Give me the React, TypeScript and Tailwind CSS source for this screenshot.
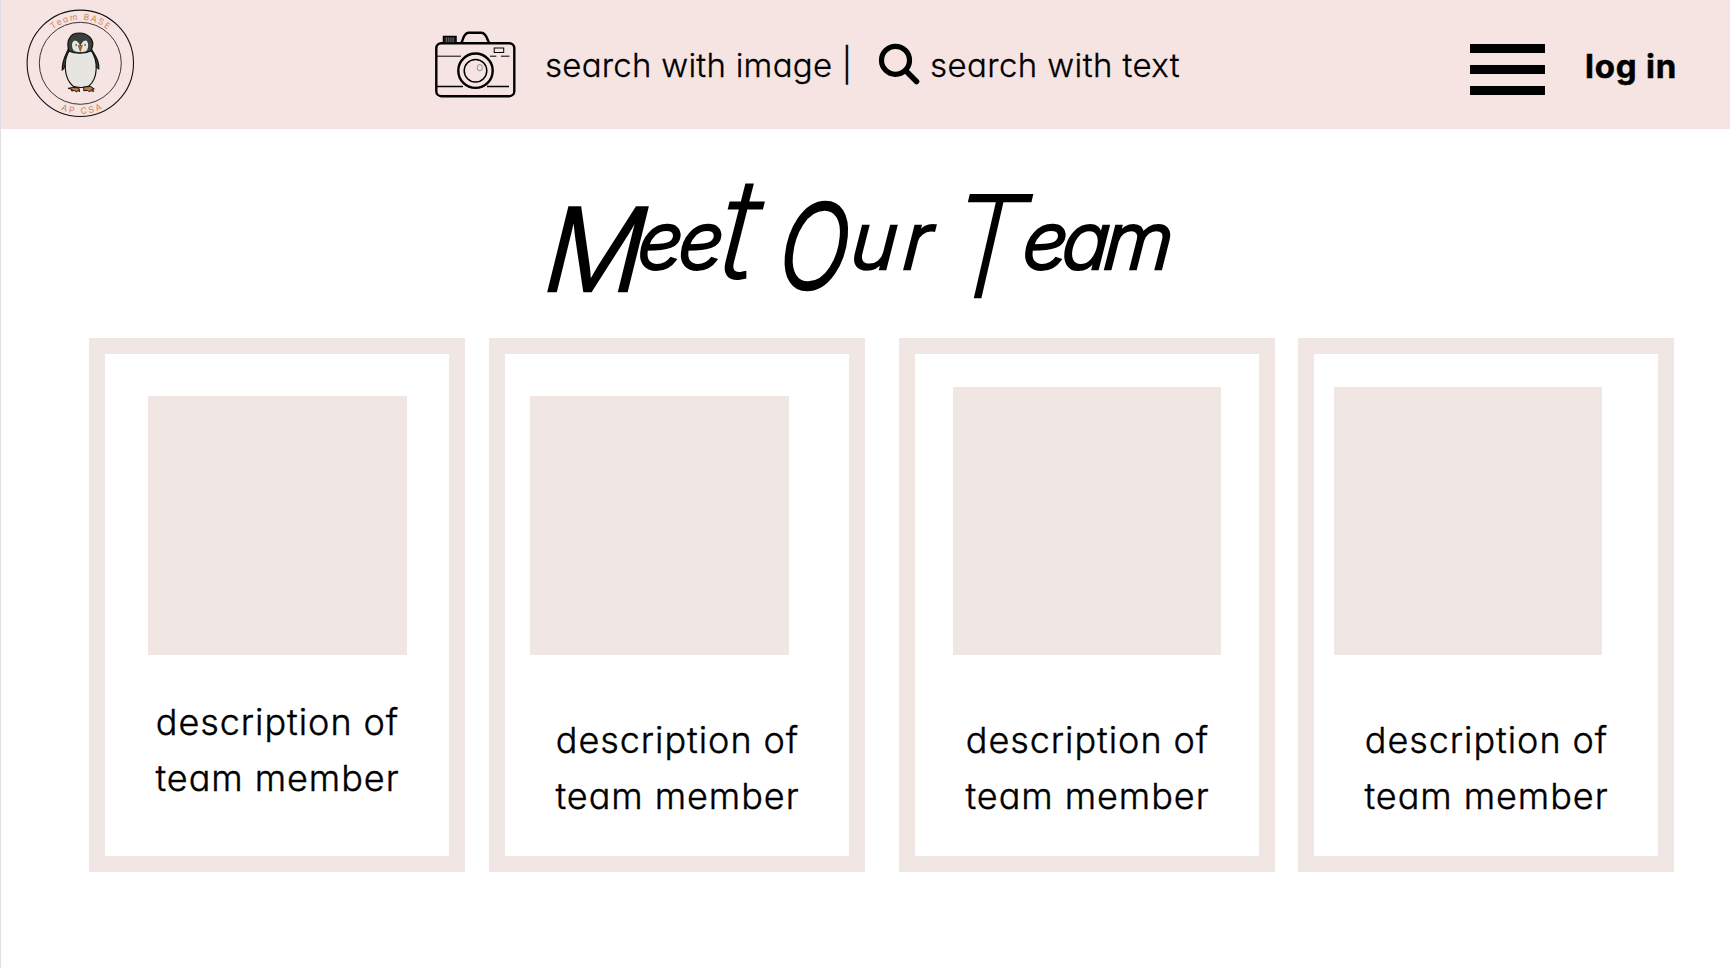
import React from "react";

const sans = "font-['Inter','Lato',sans-serif] [font-feature-settings:'cv11'] whitespace-nowrap";

function Logo() {
  return (
    <svg width="110" height="110" viewBox="25.2 8 110 110" fill="none" className="shrink-0">
      <defs>
        <path id="arcTop" d="M37 63.300a43.500 43.500 0 0 1 87 0" />
        <path id="arcBottom" d="M30 63.300a50.500 50.500 0 0 0 101 0" />
      </defs>
      <circle cx="80.5" cy="63.3" r="53.2" stroke="#111" strokeWidth="1.1" />
      <circle cx="80.5" cy="63.3" r="41" stroke="#222" strokeWidth="0.9" />
      <g className="font-['Inter',sans-serif]" fill="#cf8552" fontSize="8.6" textAnchor="middle">
        <text letterSpacing="1.500"><textPath href="#arcTop" startOffset="50.500%">Team BASE</textPath></text>
        <text letterSpacing="2.200"><textPath href="#arcBottom" startOffset="51.500%">AP CSA</textPath></text>
      </g>
      <path d="M69 48c-2 5-7 12-6.500 22 3-2 5-9 7-13zM91 48c2 5 9 11 8 21-3-1-5-8-7-12z" fill="#3b403e" stroke="#111" strokeWidth="1.200" />
      <path d="M70 50c-7 10-6 28 3 36 4 2 12 2 16 0 9-7 10-25 2-36-5-4-16-4-21 0z" fill="#e6e5df" stroke="#111" strokeWidth="1.200" />
      <path d="M69 51c-1-4-1.500-10 1-13 1-3 5-5 10-5 8 0 13 6 13 11 0 3-1 5-2 7-6 3-16 3-22 0z" fill="#3b403e" stroke="#111" strokeWidth="1.200" />
      <path d="M75 40.500c-4 1-3 8-1 10 3 2 10 2 13 0 2-3 2-9-1-10-3 0-4 3-5.500 5.500-1-3-3-5.500-5.500-5.500z" fill="#e6e5df" />
      <path d="M78.500 45.500h4l-2 6z" fill="#c96b24" stroke="#3b2412" strokeWidth=".5" />
      <circle cx="76.300" cy="45" r=".8" fill="#111" /><circle cx="85.300" cy="45" r=".8" fill="#111" />
      <path d="M73 87.500l6 .3.800 3.700-2-1-1 1.500-2-1.500-3 .5.500-1.500-4-1.200zM84 87l7-.5 3.500 2.500-2.500.3 2 2-3-.5-2 .8-1-1.300-4 .5z" fill="#c27a3c" stroke="#111" strokeWidth="1" />
    </svg>
  );
}

function Camera() {
  return (
    <svg width="82" height="68" viewBox="434 31 82 68" fill="none" stroke="#000" className="shrink-0">
      <rect x="436.300" y="43.200" width="78" height="53" rx="5" strokeWidth="2.400" />
      <path d="M461.500 42.500c1.800-3 2-9.500 7-9.800h13c5 .3 5.500 6.800 7.500 9.800" strokeWidth="2.400" />
      <path d="M443.500 42.500v-6h12.500v6" strokeWidth="1.500" fill="#222" />
      <path d="M446.500 37.500v4.500m2.200-4.500v4.500m2.200-4.500v4.500m2.200-4.500v4.500" stroke="#999" strokeWidth=".6" />
      <path d="M437 56.200h24m29 0h6.300m4.700 0h8.500" strokeWidth="1" />
      <path d="M437 86.400h26m24 0h22" strokeWidth="1.500" />
      <rect x="494.200" y="48" width="9.500" height="4.500" strokeWidth="1" />
      <circle cx="475.500" cy="70.700" r="17.200" strokeWidth="2.400" />
      <circle cx="475.500" cy="70.700" r="11.300" strokeWidth="1.500" />
      <ellipse cx="479.800" cy="67.700" rx="2.600" ry="3.100" stroke="#666" strokeWidth=".7" />
    </svg>
  );
}

function Header() {
  return (
    <header className={`${sans} flex h-[129px] items-start bg-[#f6e4e2] text-black`}>
      <div className="ml-6 mt-2 h-[110px] w-[110px]"><Logo /></div>
      <button className="ml-[299px] mt-[31px] flex"><Camera /></button>
      <span className="ml-[29px] mt-[45px] w-[302px] text-[33px] leading-[40px] font-light tracking-[0.25px] [-webkit-text-stroke:0.3px_black]">search with image |</span>
      <svg width="42" height="42" viewBox="0 0 42 42" fill="none" stroke="#000" strokeLinecap="round" className="ml-[31px] mt-[43px] shrink-0">
        <circle cx="17.500" cy="17.300" r="14" strokeWidth="5.200" />
        <path d="m28 28 10.500 10.500" strokeWidth="5.500" />
      </svg>
      <span className="ml-[10px] mt-[45px] w-[250px] text-[33px] leading-[40px] font-light tracking-[0.4px] [-webkit-text-stroke:0.3px_black]">search with text</span>
      <button className="ml-[290px] mt-[44px] flex w-[75px] shrink-0 flex-col gap-3">
        <span className="h-[9px] bg-black" />
        <span className="h-[9px] bg-black" />
        <span className="h-[9px] bg-black" />
      </button>
      <a className="ml-[40px] mt-[46px] text-[33px] leading-[40px] font-bold tracking-[0.8px] [-webkit-text-stroke:0.5px_black]">log in</a>
    </header>
  );
}

function Title() {
  return (
    <h1 className="flex h-[209px] -skew-x-5 items-baseline pl-[547px] pt-[99px] font-['Inter','Lato',sans-serif] text-[79px] leading-[0] font-light italic text-black [font-feature-settings:'cv11'] [-webkit-text-stroke:2.4px_black] [stroke-linejoin:round] whitespace-nowrap">
      <span className="w-[233px] tracking-[-4px]">
        <span className="inline-block w-[91px] origin-left scale-x-96 align-[-22px] text-[115px]">M</span>ee<span className="inline-block w-[50px] origin-left align-[-9px] text-[138px] [font-weight:200]">t</span>
      </span>
      <span className="w-[170px] tracking-[6px]">
        <span className="inline-block w-[71px] origin-left scale-x-78 align-[-20px] text-[118px]">O</span>ur
      </span>
      <span className="tracking-[-5.5px]">
        <span className="inline-block w-[73px] origin-left scale-x-86 align-[-28px] text-[140px] [font-weight:200]">T</span>eam
      </span>
    </h1>
  );
}

const members = [
  { card: "ml-0", photo: "ml-[42.5px] mt-[42px] h-[259px] w-[259.5px]", text: "mt-[39px]" },
  { card: "ml-[24px]", photo: "ml-[25px] mt-[42px] size-[259px]", text: "mt-[57px]" },
  { card: "ml-[34px]", photo: "ml-[38px] mt-[33px] size-[268px]", text: "mt-[57px]" },
  { card: "ml-[23px]", photo: "ml-[20px] mt-[33px] size-[268px]", text: "mt-[57px]" },
];

export default function App() {
  return (
    <div className="h-[968px] w-[1730px] overflow-hidden border-l border-[#e1dfe6] bg-white">
      <Header />
      <Title />
      <main className="flex pl-[88px]">
        {members.map((m, i) => (
          <section key={i} className={`h-[534px] w-[376px] shrink-0 border-16 border-[#f0e7e4] ${m.card}`}>
            <div className={`bg-[#f0e7e4] ${m.photo}`} />
            <p className={`${sans} pl-[1px] text-center text-[36px] leading-[56.4px] font-light tracking-[0.95px] text-black [-webkit-text-stroke:0.4px_black] ${m.text}`}>
              description of
              <br />
              team member
            </p>
          </section>
        ))}
      </main>
    </div>
  );
}
